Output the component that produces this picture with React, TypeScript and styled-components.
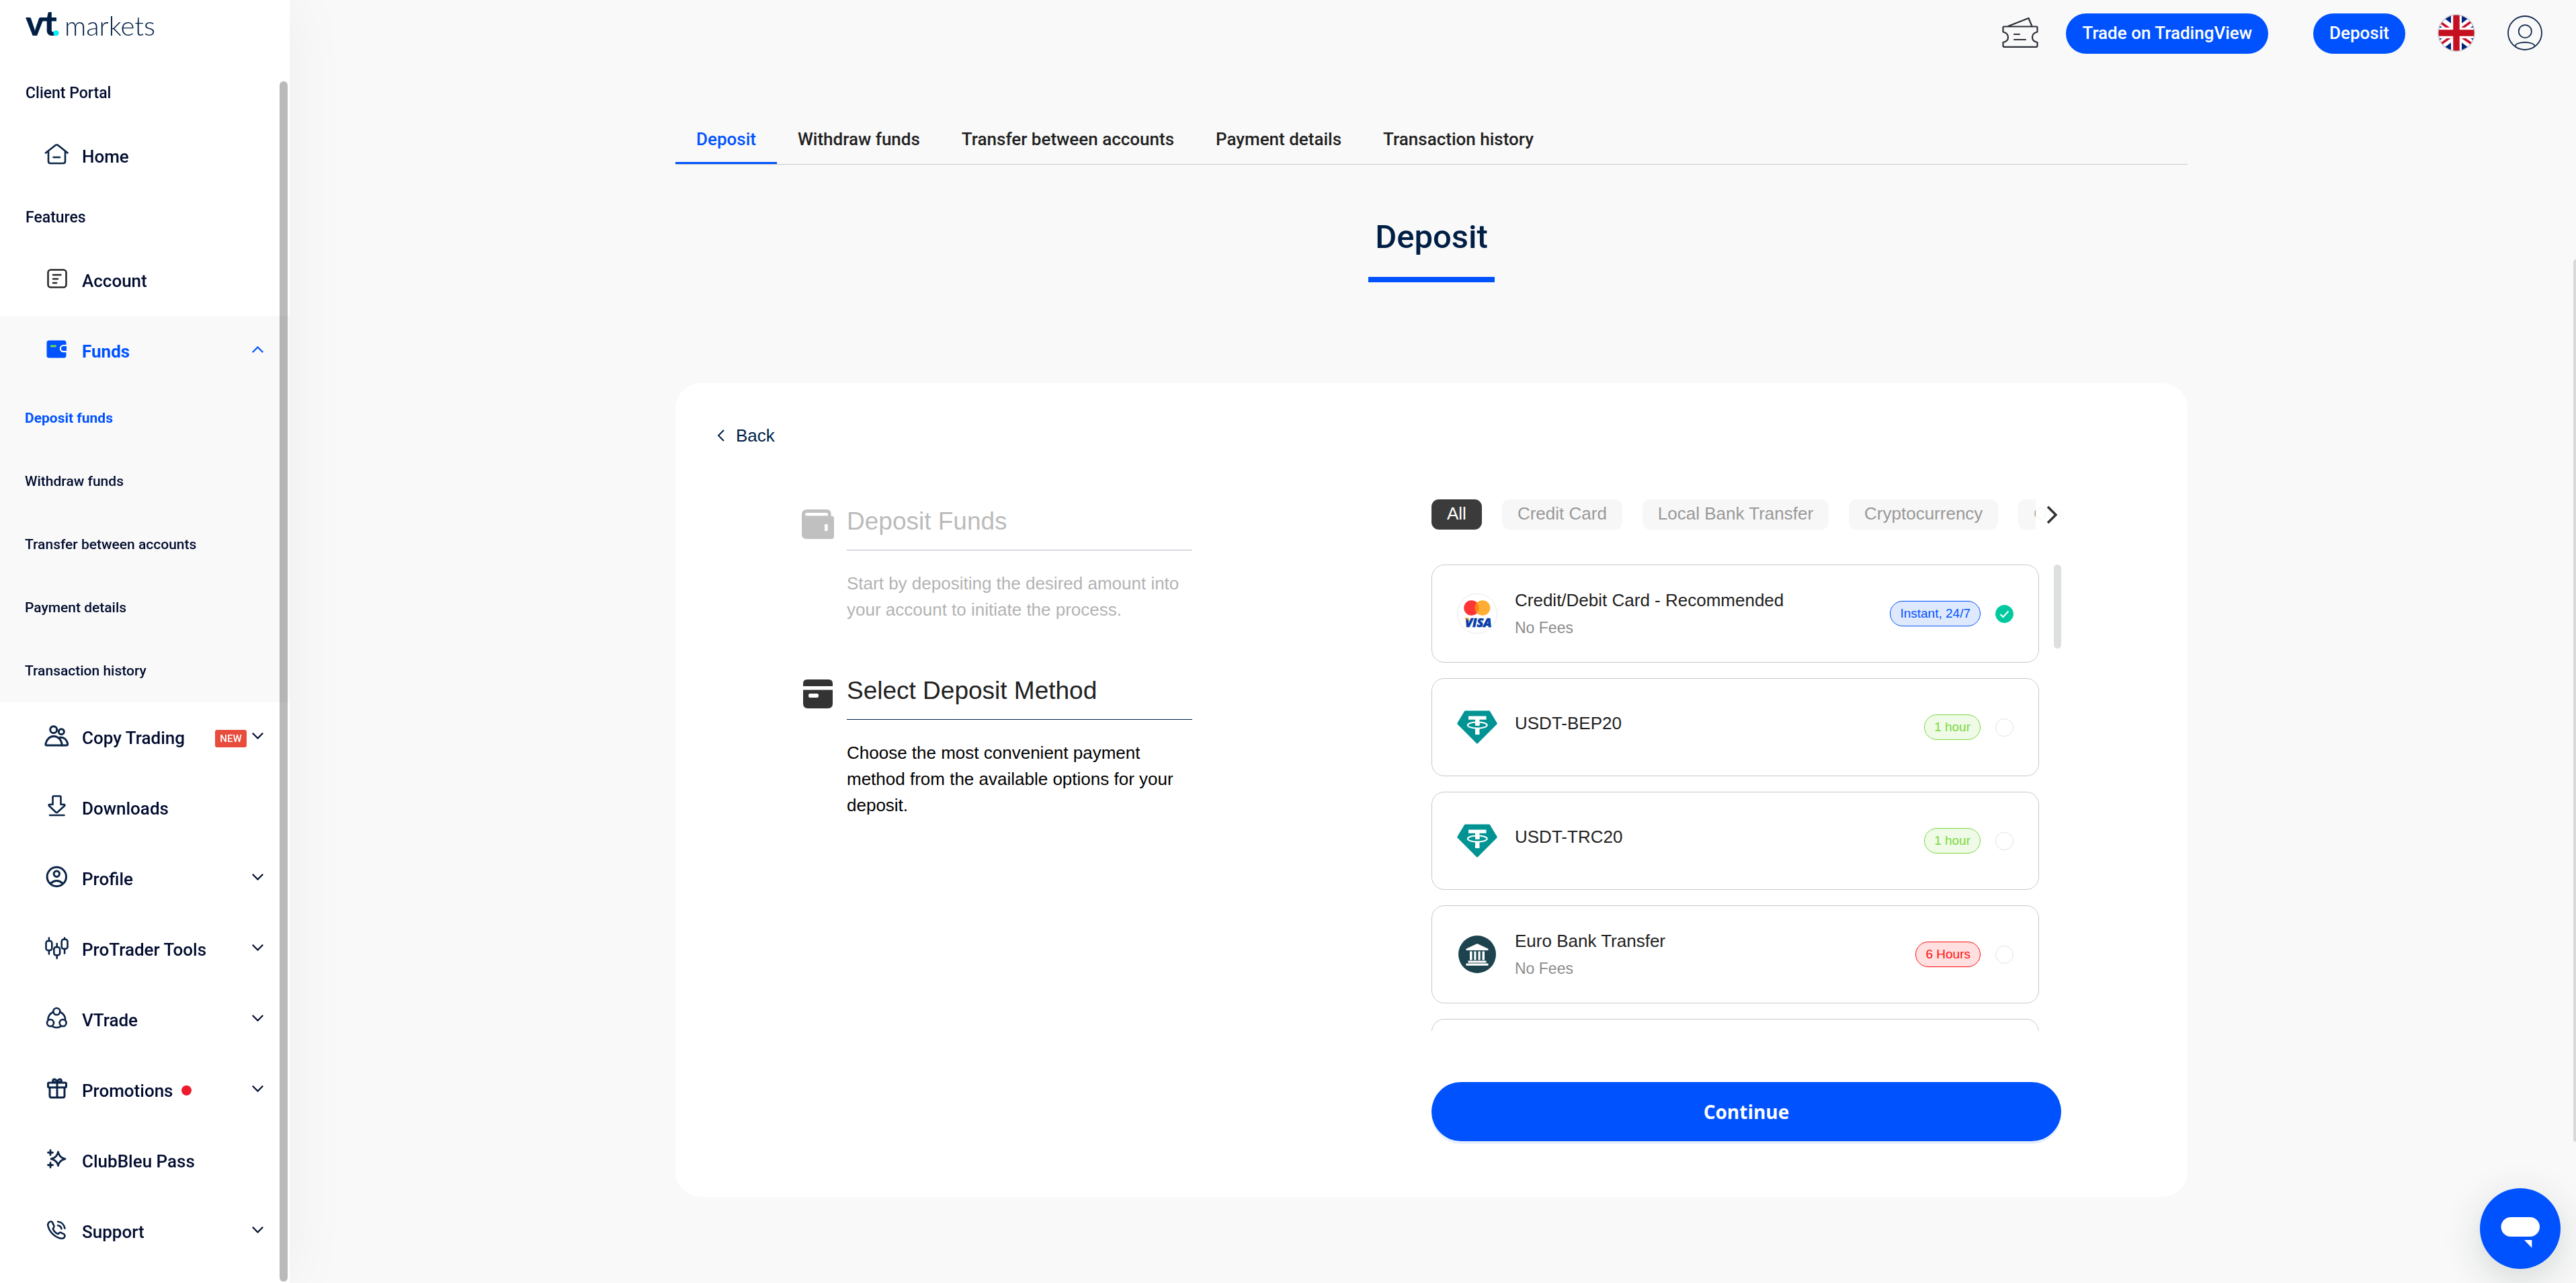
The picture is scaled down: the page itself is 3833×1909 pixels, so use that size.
import React, { useState } from "react";
import styled, { createGlobalStyle, css } from "styled-components";

const blue = "#0052ff";
const navy = "#001f45";
const ink = "#000b2e";
const roboto = `Roboto, "Liberation Sans", sans-serif`;
const arial = `"Liberation Sans", Arial, sans-serif`;

const GlobalStyle = createGlobalStyle`
  *, *::before, *::after { box-sizing: border-box; }
  body { margin: 0; background: #f9f9f9; font-family: ${arial}; color: #212121; }
  button, input { font: inherit; margin: 0; }
  button { border: 0; background: none; padding: 0; cursor: pointer; }
  a { color: inherit; text-decoration: none; }
  svg { display: block; flex: none; }
  h1, h2, p, ul { margin: 0; padding: 0; font-weight: inherit; }
`;

const Shell = styled.div`
  display: flex;
  min-height: 100vh;
  padding-left: 431px;
`;

/* Sidebar */

const Sidebar = styled.aside`
  position: fixed;
  inset: 0 auto 0 0;
  width: 431px;
  background: #fff;
  box-shadow: 0 0 90px rgba(0, 0, 0, 0.05);
  font-family: ${roboto};
  font-weight: 500;
  color: ${ink};
  overflow: hidden;
`;

const Brand = styled.a`
  display: flex;
  height: 100px;
  padding-left: 38px;
`;

const SidebarThumb = styled.div`
  position: absolute;
  top: 121px;
  bottom: 2px;
  right: 3px;
  width: 12px;
  border-radius: 6px;
  background: rgba(0, 0, 0, 0.27);
`;

const GroupLabel = styled.h2`
  height: 80px;
  padding: 24px 0 0 38px;
  font-size: 23px;
  line-height: 30px;
  font-weight: 500;
`;

const NavItem = styled.a<{ $active?: boolean }>`
  display: flex;
  align-items: center;
  height: 105px;
  padding: 0 39px 0 66px;
  font-size: 26px;
  line-height: 30px;
  color: ${(p) => (p.$active ? blue : ink)};
  font-weight: ${(p) => (p.$active ? 700 : 500)};
`;

const NavIcon = styled.span`
  display: block;
  width: 36px;
  padding-bottom: 5px;
  margin-right: 20px;
`;

const NavChevron = styled.span`
  margin-left: auto;
  padding-bottom: 5px;
`;

const NewTag = styled.span`
  margin: 2px 8px 0 auto;
  width: 47px;
  border-radius: 3px;
  background: #e84c3d;
  color: #fff;
  font-size: 15px;
  line-height: 26px;
  text-align: center;
  font-weight: 500;

  & + ${NavChevron} { margin-left: 0; }
`;

const Dot = styled.span`
  width: 15px;
  height: 15px;
  margin-left: 12px;
  border-radius: 50%;
  background: #ec1b2e;
`;

const OpenGroup = styled.div`
  background: #f9f9f9;
`;

const SubItem = styled.a<{ $active?: boolean }>`
  display: flex;
  align-items: center;
  height: 94px;
  padding-left: 37px;
  font-size: 21px;
  line-height: 30px;
  color: ${(p) => (p.$active ? blue : ink)};
  font-weight: ${(p) => (p.$active ? 700 : 500)};
`;

/* Page */

const Main = styled.main`
  flex: 1;
  min-width: 0;
  padding: 0 4px 128px 0;
`;

const Header = styled.header`
  display: flex;
  justify-content: flex-end;
  align-items: center;
  gap: 48px;
  height: 100px;
  padding-right: 46px;
`;

const TradeGroup = styled.div`
  display: flex;
  align-items: center;
  gap: 41px;
  margin-right: 19px;
`;

const Pill = styled.button`
  height: 60px;
  padding: 0 24px 2px;
  border-radius: 30px;
  background: ${blue};
  color: #fff;
  font-family: ${roboto};
  font-size: 26px;
  line-height: 30px;
  font-weight: 500;
`;

const IconButton = styled.button`
  display: block;
  padding-bottom: 3px;
`;

const Content = styled.div`
  width: 100%;
  max-width: 2250px;
  margin: 0 auto;
  padding-top: 92px;
`;

const Tabs = styled.nav`
  display: flex;
  border-bottom: 1px solid #c8c8c8;
  font-family: ${roboto};
`;

const Tab = styled.a<{ $active?: boolean }>`
  padding: 0 31px 19px;
  border-bottom: 3px solid ${(p) => (p.$active ? blue : "transparent")};
  font-size: 26px;
  line-height: 30px;
  font-weight: 500;
  color: ${(p) => (p.$active ? blue : "#212121")};
`;

const TitleRow = styled.div`
  display: flex;
  justify-content: center;
  margin: 78px 0 150px;
`;

const Title = styled.h1`
  padding: 0 10px 29px;
  border-bottom: 8px solid ${blue};
  font-family: ${roboto};
  font-size: 49px;
  line-height: 60px;
  font-weight: 500;
  color: ${navy};
`;

const Card = styled.section`
  padding: 63px 0 83px;
  border-radius: 38px;
  background: #fff;
`;

const Back = styled.button`
  display: flex;
  align-items: center;
  gap: 17px;
  margin-left: 62px;
  color: ${navy};
  font-size: 26px;
  line-height: 30px;
`;

const Columns = styled.div`
  display: grid;
  grid-template-columns: 1fr 1fr;
  margin-top: 80px;
  padding: 0 188px;
`;

const Steps = styled.div`
  display: flex;
  flex-direction: column;
  gap: 79px;
  width: 581px;
  padding-top: 11px;
`;

const Step = styled.div<{ $done?: boolean }>`
  display: flex;
  gap: 19px;
  opacity: ${(p) => (p.$done ? 0.3 : 1)};
`;

const StepIcon = styled.span`
  padding-top: 2px;
`;

const StepText = styled.div`
  flex: 1;
`;

const StepTitle = styled.h2`
  padding-bottom: 20px;
  border-bottom: 1px solid ${navy};
  font-size: 37px;
  line-height: 44px;
`;

const StepBody = styled.p`
  margin-top: 30px;
  font-size: 26px;
  line-height: 39px;
  color: #000;
`;

const Picker = styled.div`
  min-width: 0;
`;

const ChipBar = styled.div`
  position: relative;
  overflow: hidden;
`;

const Chips = styled.div`
  display: flex;
  gap: 30px;
`;

const Chip = styled.button<{ $active?: boolean }>`
  flex: none;
  height: 45px;
  padding: 0 23px 3px;
  border-radius: 11px;
  font-size: 26px;
  line-height: 30px;
  background: ${(p) => (p.$active ? "#3b3b3b" : "#f7f7f7")};
  color: ${(p) => (p.$active ? "#fff" : "#999")};
`;

const ChipNext = styled.button`
  position: absolute;
  inset: 0 0 0 auto;
  width: 38px;
  padding-left: 16px;
  background: rgba(255, 255, 255, 0.94);
`;

const ListBox = styled.div`
  position: relative;
  height: 694px;
  margin-top: 52px;
  padding-right: 33px;
  overflow: hidden;
`;

const ListThumb = styled.div`
  position: absolute;
  top: 0;
  right: 0;
  width: 11px;
  height: 125px;
  border-radius: 6px;
  background: #dedfe0;
`;

const MethodList = styled.div`
  display: flex;
  flex-direction: column;
  gap: 23px;
`;

const methodFrame = css`
  flex: none;
  height: 146px;
  border: 1px solid #c8c8c8;
  border-radius: 19px;
`;

const Method = styled.label`
  ${methodFrame}
  display: flex;
  align-items: center;
  padding: 0 37px;
  cursor: pointer;
`;

const MethodBlank = styled.div`
  ${methodFrame}
`;

const MethodText = styled.span`
  display: flex;
  flex-direction: column;
  flex: 1;
  margin-left: 26px;
`;

const MethodName = styled.span`
  margin-bottom: 12px;
  font-size: 26px;
  line-height: 30px;
`;

const MethodFee = styled.span`
  font-size: 23px;
  line-height: 28px;
  color: #8c8c8c;
`;

type Tone = "blue" | "green" | "red";
const tones: Record<Tone, [string, string]> = {
  blue: ["#0052ff", "#dfe9fe"],
  green: ["#79d93c", "#effae7"],
  red: ["#ff0f0f", "#ffdfdf"],
};

const Badge = styled.span<{ $tone: Tone }>`
  height: 38px;
  margin-right: 22px;
  padding: 0 14px;
  border: 1px solid ${(p) => tones[p.$tone][0]};
  border-radius: 19px;
  background: ${(p) => tones[p.$tone][1]};
  color: ${(p) => tones[p.$tone][0]};
  font-size: 19px;
  line-height: 35px;
`;

const RadioWrap = styled.span`
  position: relative;
  width: 27px;
  height: 27px;
`;

const Radio = styled.input`
  appearance: none;
  display: block;
  width: 27px;
  height: 27px;
  border: 1px solid #e2e2e2;
  border-radius: 50%;
  background: #fff;
  cursor: pointer;

  &:checked {
    border-color: #00c9a0;
    background: #00c9a0;
  }
`;

const RadioMark = styled.svg`
  position: absolute;
  inset: 0;
  pointer-events: none;
`;

const Continue = styled.button`
  width: 100%;
  height: 88px;
  margin-top: 76px;
  border-radius: 44px;
  background: ${blue};
  box-shadow: 0 4px 0 #e6effe;
  color: #fff;
  font-family: "Open Sans", "Noto Sans", sans-serif;
  font-size: 28px;
  line-height: 40px;
  font-weight: 700;
`;

const PageThumb = styled.div`
  position: fixed;
  top: 386px;
  bottom: 210px;
  right: 0;
  width: 4px;
  border-radius: 4px 0 0 4px;
  background: #d8d9db;
`;

const ChatButton = styled.button`
  position: fixed;
  right: 23px;
  bottom: 21px;
  width: 120px;
  height: 120px;
  border-radius: 50%;
  background: ${blue};
  box-shadow: 0 15px 60px rgba(0, 40, 30, 0.16);
`;

/* Drawings */

const Stroke = ({ children, color = "#0b2447", width = 3 }: { children: React.ReactNode; color?: string; width?: number }) => (
  <svg width="36" height="36" viewBox="0 0 36 36" fill="none" stroke={color} strokeWidth={width} strokeLinecap="round" strokeLinejoin="round" aria-hidden="true">
    {children}
  </svg>
);

const icons = {
  home: (
    <Stroke width={2.6}>
      <path d="M2 15.500 16 4.400q2.400-1.800 4.800 0L34.600 15.500M6 13v15q0 3 3 3h19q3 0 3-3V13M13.500 22h9.500" />
    </Stroke>
  ),
  account: (
    <Stroke color="#2a2a2a" width={2.6}>
      <rect x="5.500" y="4.500" width="27" height="26" rx="4" />
      <path d="M13 12h11.500M13 18h7M13 24h5" />
    </Stroke>
  ),
  funds: (
    <svg width="36" height="36" viewBox="0 0 36 36" aria-hidden="true">
      <rect x="3.500" y="4.500" width="29" height="26" rx="3.500" fill={blue} />
      <path d="M9 13h8.700" stroke="#6fe04a" strokeWidth="3" />
      <path d="M33 12h-4.500a4.600 4.600 0 0 0 0 9.200H33" fill={blue} stroke="#f9f9f9" strokeWidth="2.200" />
    </svg>
  ),
  copy: (
    <Stroke>
      <circle cx="13.700" cy="8.700" r="5" />
      <circle cx="25.300" cy="11.700" r="4" />
      <path d="M3.500 32C1.500 32 1.800 30.500 2 29.500 3.300 23 8 18.500 14 18.500S25.500 23 26.300 32Z" />
      <path d="M23 20.300c6-.6 10.300 3.200 11.700 9 .4 1.700 0 2.700-1.700 2.700h-6.700" />
    </Stroke>
  ),
  downloads: (
    <Stroke width={2.6}>
      <path d="M12.500 4q0-1.500 1.500-1.500h9q1.500 0 1.500 1.500v11h5q1.500.5.5 2L19.500 26.500q-1.200 1-2.400 0L7 17q-1-1.500.5-2h5ZM8 31h21.500" />
    </Stroke>
  ),
  profile: (
    <Stroke>
      <circle cx="18.300" cy="17.500" r="14.200" />
      <circle cx="18.300" cy="13.300" r="4.200" />
      <path d="M9 27.500q9.300-8 18.600 0" />
    </Stroke>
  ),
  tools: (
    <Stroke width={2.6}>
      <rect x="2.500" y="8" width="8.800" height="14" rx="3" />
      <rect x="14.300" y="17.300" width="8.800" height="12" rx="3" />
      <rect x="25.700" y="5.700" width="8.800" height="14" rx="3" />
      <path d="M6.900 3.500V8M6.900 22v5.500M18.700 12v5M18.700 29.500V34M30.100 3.500v2M30.100 20v6.500" />
    </Stroke>
  ),
  vtrade: (
    <Stroke width={2.6}>
      <circle cx="18.300" cy="8" r="5" />
      <circle cx="9" cy="25" r="5" />
      <circle cx="27.600" cy="25" r="5" />
      <path d="M13.300 8.500Q5 13 5.500 21M23.300 8.500q8.300 4.500 7.800 12.500M11.500 30q6.800 4 13.600 0" />
    </Stroke>
  ),
  gift: (
    <Stroke width={3}>
      <rect x="5.500" y="9" width="27" height="7" rx="1.500" />
      <path d="M8 16v12.500q0 2.500 2.500 2.500h17q2.500 0 2.500-2.500V16M19 9v22M19 8.500c-5 0-7.500-1.500-6-3.700S18 4 19 8.500ZM19 8.500c5 0 7.500-1.500 6-3.700S20 4 19 8.500Z" />
    </Stroke>
  ),
  sparkle: (
    <Stroke width={2.8}>
      <path d="M20.500 7q1.500 8.300 10.500 10.300-9 2-10.500 10.200Q19 19.300 10 17.300 19 15.300 20.500 7ZM9 4.500v7M5.500 8h7M9 23v7M5.500 26.500h7" />
    </Stroke>
  ),
  support: (
    <Stroke width={2.6}>
      <path d="M9.500 5.500c-3.200.6-4.800 3.200-4 6.800C7.500 20.500 15 29 24.500 30.700c3.300.5 5.600-1 6-3.700.2-1.200-.3-2-1.300-2.600l-4.400-2.300c-1.200-.6-2-.3-2.900.5l-1.500 1.500c-3.500-1.300-6.300-4.300-7.700-7.800l1.300-1.800c.7-1 .7-1.800.2-2.900L12 6.900c-.5-1-1.300-1.600-2.500-1.400ZM20 5.700c5.500.5 9.500 4.500 10.500 10M20 11.300c2.800.4 4.800 2.200 5.600 5" />
    </Stroke>
  ),
};

const Chevron = ({ up }: { up?: boolean }) => (
  <svg width="17" height="10" viewBox="0 0 17 10" fill="none" stroke="currentColor" strokeWidth="2.200" aria-hidden="true">
    <path d={up ? "M.8 9.200 8.500 1.500l7.700 7.700" : "M.8.800 8.500 8.500 16.200.8"} />
  </svg>
);

const Logo = () => (
  <svg width="200" height="76" viewBox="0 0 200 76" role="img" aria-label="VT Markets">
    <g fill={navy} fontFamily="Lato, sans-serif">
      <text x="0" y="53" fontSize="52" fontWeight="900">v</text>
      <text x="27" y="53" fontSize="52" fontWeight="900">t</text>
      <text x="58" y="53" fontSize="40" fontWeight="300">markets</text>
      <path d="M22 26h24v5.500H20Z" />
    </g>
    <circle cx="45.500" cy="49.300" r="4" fill="#00f0ff" />
  </svg>
);

const TicketIcon = () => (
  <svg width="54" height="50" viewBox="0 0 54 50" fill="none" stroke="#2b2f36" strokeWidth="2.200" strokeLinejoin="round" strokeLinecap="round" aria-hidden="true">
    <path d="M3 15.500h48q1.500 0 1.500 1.500v6.500c-10 2.500-10 13.500 0 15.500V44q0 1.800-1.800 1.800H3.300q-1.800 0-1.800-1.800v-5c10-2 10-13 0-15.500V17q0-1.500 1.500-1.500ZM9 15 39.500 3l5 12M18 27h8M18 35h17" />
  </svg>
);

const FlagIcon = () => (
  <svg width="56" height="56" viewBox="0 0 56 56" aria-hidden="true">
    <defs>
      <clipPath id="flag-disc"><circle cx="28" cy="28" r="26.500" /></clipPath>
    </defs>
    <circle cx="28" cy="28" r="27.300" fill="#fff" stroke="#d5d5d5" strokeWidth="1.400" />
    <g clipPath="url(#flag-disc)">
      <path fill="#00247d" d="M0 0h56v56H0z" />
      <path d="m-6 2 68 52M62 2-6 54" stroke="#fff" strokeWidth="13" />
      <path d="m0 9 26 19M28 27 60 4M30 30l28 19M28 28-4 51" stroke="#c8102e" strokeWidth="3.600" />
      <path d="M28 0v56M0 28h56" stroke="#fff" strokeWidth="16" />
      <path d="M28 0v56M0 28h56" stroke="#c5111f" strokeWidth="9.500" />
    </g>
  </svg>
);

const UserIcon = () => (
  <svg width="52" height="52" viewBox="0 0 52 52" fill="none" stroke="#12294d" strokeWidth="1.800" aria-hidden="true">
    <circle cx="26" cy="26" r="25" />
    <circle cx="26.300" cy="23.700" r="9.600" />
    <path d="M11.500 46c0-8 29-8 29 0" />
  </svg>
);

const WalletIcon = () => (
  <svg width="48" height="48" viewBox="0 0 48 48" aria-hidden="true">
    <path fill="#333" fillRule="evenodd" d="M8 2h29q6.500 0 6.500 6v3.500H44q4 0 4 4V42q0 4-4 4H7q-7 0-7-7V10Q0 2 8 2Zm0 5q-3 0-3 2.300T8 11.500h31V9q0-2-2-2ZM34 24h4.700v10H34Z" />
  </svg>
);

const MethodIcon = () => (
  <svg width="48" height="48" viewBox="0 0 48 48" aria-hidden="true">
    <path fill="#333" fillRule="evenodd" d="M2 13V9q0-6 6-6h32q6 0 6 6v4ZM2 18.500h44v20.500q0 7-7 7H9q-7 0-7-7Zm10 5.500q-2 0-2 3t2 3h11q2 0 2-3t-2-3Z" />
  </svg>
);

const VisaLogo = () => (
  <svg width="60" height="60" viewBox="0 0 60 60" aria-hidden="true">
    <circle cx="30" cy="30" r="29.500" fill="#fff" stroke="#e8e8e8" />
    <circle cx="21.500" cy="21.500" r="11.300" fill="#ff3636" />
    <circle cx="38" cy="21.500" r="11.300" fill="#ffad33" />
    <path d="M29.750 13.800a11.300 11.300 0 0 1 0 15.400 11.300 11.300 0 0 1 0-15.400Z" fill="#ff8412" />
    <text x="12" y="50" fontFamily="Open Sans, sans-serif" fontSize="18" fontWeight="800" fontStyle="italic" fill="#0a3fa8" stroke="#0a3fa8" strokeWidth=".7">VISA</text>
    <path d="M9.500 36.300h6q1.500 0 2 1.500l.7 3.700q-2.700-3.800-8.700-5.200Z" fill="#f5a623" />
  </svg>
);

const TetherLogo = () => (
  <svg width="60" height="60" viewBox="0 0 60 60" aria-hidden="true">
    <path fill="#009393" d="M12.500 5.500h35q1 0 1.500.8L59.500 23.700q.6 1.200-.3 2.100L31 54q-1 1-2 0L.8 25.800q-.9-.9-.3-2.100L11 6.300q.5-.8 1.500-.8Z" />
    <path fill="#fff" d="M17 13.500h26.500v5.300H33.500v9h-6.500v-9H17Z" />
    <ellipse cx="30.300" cy="27" rx="14.500" ry="4.600" fill="none" stroke="#fff" strokeWidth="2" />
    <path fill="#fff" d="M27 22h6.500v5.600H27ZM27 31h6.500v10H27Z" />
  </svg>
);

const BankLogo = () => (
  <svg width="60" height="60" viewBox="0 0 60 60" aria-hidden="true">
    <circle cx="30" cy="30" r="28" fill="#1d434f" />
    <path fill="#fff" d="M29 14.400q1-.5 2 0l14.500 6.800q1.200.6 1.200 1.800T45.500 24h-31q-1.200 0-1.200-1t1.200-1.800ZM19 25.500h3.600v13H19ZM25.300 25.500h3.200v13h-3.200ZM31.500 25.500h3.200v13h-3.200ZM37.500 25.500H41v13h-3.500ZM16.500 39.500h27v3h-27ZM13.500 43.500h33v3.300h-33Z" />
  </svg>
);

/* Data */

const navRows = [
  { label: "Copy Trading", icon: icons.copy, menu: true, tag: true },
  { label: "Downloads", icon: icons.downloads },
  { label: "Profile", icon: icons.profile, menu: true },
  { label: "ProTrader Tools", icon: icons.tools, menu: true },
  { label: "VTrade", icon: icons.vtrade, menu: true },
  { label: "Promotions", icon: icons.gift, menu: true, dot: true },
  { label: "ClubBleu Pass", icon: icons.sparkle },
  { label: "Support", icon: icons.support, menu: true },
];

const fundPages = ["Withdraw funds", "Transfer between accounts", "Payment details", "Transaction history"];

const chips = ["All", "Credit Card", "Local Bank Transfer", "Cryptocurrency", "Others"];

const methods: { name: string; fee?: string; logo: React.ReactNode; time: string; tone: Tone }[] = [
  { name: "Credit/Debit Card - Recommended", fee: "No Fees", logo: <VisaLogo />, time: "Instant, 24/7", tone: "blue" },
  { name: "USDT-BEP20", logo: <TetherLogo />, time: "1 hour", tone: "green" },
  { name: "USDT-TRC20", logo: <TetherLogo />, time: "1 hour", tone: "green" },
  { name: "Euro Bank Transfer", fee: "No Fees", logo: <BankLogo />, time: "6 Hours", tone: "red" },
];

export default function App() {
  const [chip, setChip] = useState("All");
  const [method, setMethod] = useState(methods[0].name);

  return (
    <>
      <GlobalStyle />
      <Shell>
        <Main>
          <Header>
            <TradeGroup>
              <IconButton aria-label="Vouchers"><TicketIcon /></IconButton>
              <Pill>Trade on TradingView</Pill>
            </TradeGroup>
            <Pill>Deposit</Pill>
            <IconButton aria-label="Language"><FlagIcon /></IconButton>
            <IconButton aria-label="Profile menu"><UserIcon /></IconButton>
          </Header>

          <Content>
            <Tabs>
              <Tab href="#deposit" $active>Deposit</Tab>
              {fundPages.map((page) => (
                <Tab key={page} href="#tab">{page}</Tab>
              ))}
            </Tabs>

            <TitleRow>
              <Title>Deposit</Title>
            </TitleRow>

            <Card>
              <Back>
                <svg width="11" height="18" viewBox="0 0 11 18" fill="none" stroke="currentColor" strokeWidth="2" aria-hidden="true">
                  <path d="M10 1 2 9l8 8" />
                </svg>
                Back
              </Back>
              <Columns>
                <Steps>
                  <Step $done>
                    <StepIcon><WalletIcon /></StepIcon>
                    <StepText>
                      <StepTitle>Deposit Funds</StepTitle>
                      <StepBody>Start by depositing the desired amount into your account to initiate the process.</StepBody>
                    </StepText>
                  </Step>
                  <Step>
                    <StepIcon><MethodIcon /></StepIcon>
                    <StepText>
                      <StepTitle>Select Deposit Method</StepTitle>
                      <StepBody>Choose the most convenient payment method from the available options for your deposit.</StepBody>
                    </StepText>
                  </Step>
                </Steps>

                <Picker>
                  <ChipBar>
                    <Chips>
                      {chips.map((name) => (
                        <Chip key={name} $active={name === chip} onClick={() => setChip(name)}>{name}</Chip>
                      ))}
                    </Chips>
                    <ChipNext aria-label="More categories">
                      <svg width="18" height="28" viewBox="0 0 18 28" fill="none" stroke="#333" strokeWidth="3.500" aria-hidden="true">
                        <path d="m2 2 12 12L2 26" />
                      </svg>
                    </ChipNext>
                  </ChipBar>

                  <ListBox>
                    <MethodList>
                      {methods.map((m) => (
                        <Method key={m.name}>
                          {m.logo}
                          <MethodText>
                            <MethodName>{m.name}</MethodName>
                            {m.fee && <MethodFee>{m.fee}</MethodFee>}
                          </MethodText>
                          <Badge $tone={m.tone}>{m.time}</Badge>
                          <RadioWrap>
                            <Radio type="radio" name="method" checked={m.name === method} onChange={() => setMethod(m.name)} />
                            {m.name === method && (
                              <RadioMark width="27" height="27" viewBox="0 0 27 27" fill="none" stroke="#fff" strokeWidth="2">
                                <path d="m7.500 14 4 4 8-8.500" />
                              </RadioMark>
                            )}
                          </RadioWrap>
                        </Method>
                      ))}
                      <MethodBlank />
                    </MethodList>
                    <ListThumb />
                  </ListBox>

                  <Continue>Continue</Continue>
                </Picker>
              </Columns>
            </Card>
          </Content>
        </Main>
      </Shell>

      <Sidebar>
        <Brand href="#home"><Logo /></Brand>
        <GroupLabel>Client Portal</GroupLabel>
        <NavItem href="#home"><NavIcon>{icons.home}</NavIcon>Home</NavItem>
        <GroupLabel>Features</GroupLabel>
        <NavItem href="#account"><NavIcon>{icons.account}</NavIcon>Account</NavItem>
        <OpenGroup>
          <NavItem href="#funds" $active>
            <NavIcon>{icons.funds}</NavIcon>Funds
            <NavChevron><Chevron up /></NavChevron>
          </NavItem>
          <SubItem href="#deposit" $active>Deposit funds</SubItem>
          {fundPages.map((page) => (
            <SubItem key={page} href="#sub">{page}</SubItem>
          ))}
        </OpenGroup>
        {navRows.map((row) => (
          <NavItem key={row.label} href="#row">
            <NavIcon>{row.icon}</NavIcon>
            {row.label}
            {row.dot && <Dot />}
            {row.tag && <NewTag>NEW</NewTag>}
            {row.menu && <NavChevron><Chevron /></NavChevron>}
          </NavItem>
        ))}
        <SidebarThumb />
      </Sidebar>

      <PageThumb />
      <ChatButton aria-label="Open chat">
        <svg width="120" height="120" viewBox="0 0 120 120" fill="#fff" aria-hidden="true">
          <rect x="31.500" y="43" width="57.500" height="29" rx="14.500" />
          <path d="M66 77h11.300v11.700Z" />
        </svg>
      </ChatButton>
    </>
  );
}
